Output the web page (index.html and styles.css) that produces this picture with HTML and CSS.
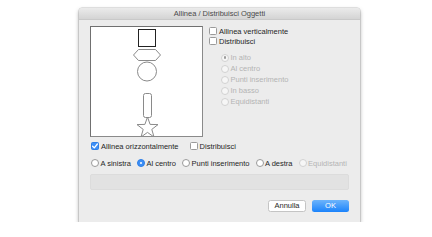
FILE: index.html
```html
<!DOCTYPE html>
<html>
<head>
<meta charset="utf-8">
<link rel="stylesheet" href="styles.css">
</head>
<body>
<div class="win">
  <div class="titlebar">Allinea / Distribuisci Oggetti</div>
  <div class="content">
    <div class="top">
      <div class="canvas">
        <svg class="shapes" width="111" height="109" viewBox="0 0 111 109">
          <rect x="47.5" y="2.5" width="17" height="17" fill="none" stroke="#222" stroke-width="1"/>
          <polygon points="42.5,28 47.5,22.5 64.5,22.5 69.5,28 64.5,33.5 47.5,33.5" fill="none" stroke="#8a8a8a" stroke-width="1"/>
          <circle cx="56" cy="44.5" r="9.5" fill="none" stroke="#8a8a8a" stroke-width="1"/>
          <rect x="52.5" y="66.5" width="8" height="24" rx="2" fill="none" stroke="#8a8a8a" stroke-width="1"/>
          <polygon points="56.5,90 59.1,97.4 67,97.6 60.8,102.4 63,110 56.5,105.4 50,110 52.2,102.4 46,97.6 53.9,97.4" fill="none" stroke="#8a8a8a" stroke-width="1"/>
        </svg>
      </div>
      <div class="side">
        <div class="row"><span class="chk"></span><span>Allinea verticalmente</span></div>
        <div class="row"><span class="chk"></span><span>Distribuisci</span></div>
        <div class="vgroup">
          <div class="row vrow disabled"><span class="rad on-dis"></span><span>In alto</span></div>
          <div class="row vrow disabled"><span class="rad"></span><span>Al centro</span></div>
          <div class="row vrow disabled"><span class="rad"></span><span>Punti inserimento</span></div>
          <div class="row vrow disabled"><span class="rad"></span><span>In basso</span></div>
          <div class="row vrow disabled"><span class="rad"></span><span>Equidistanti</span></div>
        </div>
      </div>
    </div>
    <div class="hrow">
      <div class="row"><span class="chk checked"><svg width="8" height="8" viewBox="0 0 8 8"><path d="M1.6 4.2 L3.3 5.9 L6.4 2" fill="none" stroke="#fff" stroke-width="1.3" stroke-linecap="round" stroke-linejoin="round"/></svg></span><span>Allinea orizzontalmente</span></div>
      <div class="row"><span class="chk"></span><span>Distribuisci</span></div>
    </div>
    <div class="radrow">
      <div class="row"><span class="rad"></span><span>A sinistra</span></div>
      <div class="row"><span class="rad on"></span><span>Al centro</span></div>
      <div class="row"><span class="rad"></span><span>Punti inserimento</span></div>
      <div class="row"><span class="rad"></span><span>A destra</span></div>
      <div class="row disabled"><span class="rad"></span><span>Equidistanti</span></div>
    </div>
    <div class="info"></div>
    <div class="buttons">
      <div class="btn cancel">Annulla</div>
      <div class="btn ok">OK</div>
    </div>
  </div>
</div>
</body>
</html>
```
FILE: styles.css
```css
html, body {
  margin: 0;
  padding: 0;
  background: #ffffff;
}
body {
  font-family: "Liberation Sans", Arial, sans-serif;
  font-size: 7.5px;
  color: #262626;
  padding-top: 8px;
  padding-left: 79px;
}
.win {
  width: 281px;
  height: 214px;
  background: #ececec;
  box-shadow: 0 0 0 0.5px rgba(0,0,0,0.18), 0 2px 4px rgba(0,0,0,0.35);
  border-radius: 3px 3px 0 0;
  overflow: hidden;
}
.titlebar {
  height: 12px;
  line-height: 12px;
  box-sizing: border-box;
  text-align: center;
  color: #4a4a4a;
  background: linear-gradient(#ebebeb, #d4d4d4);
  border-bottom: 1px solid #c9c9c9;
}
.content {
  padding: 6px 11px 0 11px;
}
.top {
  display: flex;
  gap: 6px;
}
.canvas {
  width: 113px;
  height: 111px;
  box-sizing: border-box;
  background: #fff;
  border: 1px solid #707070;
  border-right-color: #8a8a8a;
  border-bottom-color: #8a8a8a;
}
.shapes {
  display: block;
}
.side {
  display: flex;
  flex-direction: column;
}
.row {
  display: flex;
  align-items: center;
  height: 10px;
  white-space: nowrap;
}
.chk {
  width: 8px;
  height: 8px;
  box-sizing: border-box;
  border: 1px solid #9a9a9a;
  border-radius: 1.5px;
  background: #fff;
  margin-right: 2px;
  flex: none;
  display: flex;
}
.chk.checked {
  background: #3d8ff6;
  border-color: #2f7fe6;
}
.chk svg {
  display: block;
  margin: -1px;
}
.vgroup {
  margin-top: 6px;
  margin-left: 12px;
  display: flex;
  flex-direction: column;
}
.vrow {
  height: 11px;
}
.rad {
  width: 8px;
  height: 8px;
  box-sizing: border-box;
  border: 1px solid #9a9a9a;
  border-radius: 50%;
  background: #fff;
  margin-right: 1.5px;
  flex: none;
  display: flex;
  align-items: center;
  justify-content: center;
}
.rad.on {
  background: #3d8ff6;
  border-color: #2f7fe6;
}
.rad.on::after {
  content: "";
  width: 2.5px;
  height: 2.5px;
  border-radius: 50%;
  background: #fff;
}
.disabled {
  color: #b4b4b4;
}
.disabled .rad {
  border-color: #d2d2d2;
  background: #f6f6f6;
}
.rad.on-dis::after {
  content: "";
  width: 2.5px;
  height: 2.5px;
  border-radius: 50%;
  background: #9a9a9a;
}
.hrow {
  display: flex;
  gap: 11px;
  margin-top: 4px;
  padding-left: 1px;
}
.radrow {
  display: flex;
  gap: 6px;
  margin-top: 7px;
  padding-left: 1px;
}
.info {
  margin-top: 6px;
  height: 16px;
  box-sizing: border-box;
  background: #e2e2e2;
  border: 1px solid #dcdcdc;
  border-radius: 2px;
}
.buttons {
  display: flex;
  justify-content: flex-end;
  gap: 6px;
  margin-top: 10px;
}
.btn {
  height: 12px;
  line-height: 12px;
  box-sizing: border-box;
  text-align: center;
  border-radius: 2.5px;
}
.cancel {
  width: 38px;
  background: #fff;
  border: 1px solid #c4c4c4;
  line-height: 10px;
  color: #262626;
}
.ok {
  width: 37px;
  background: linear-gradient(#6db4fb, #1b83fb);
  color: #fff;
}
```
